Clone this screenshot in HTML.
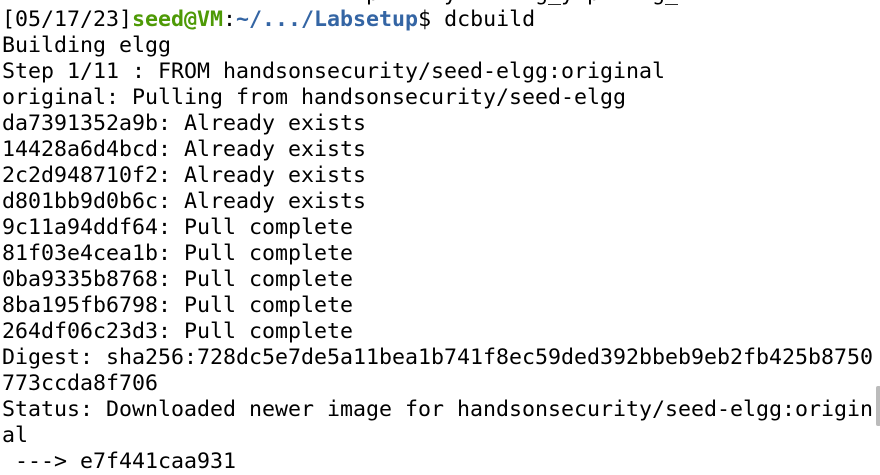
<!DOCTYPE html>
<html><head><style>
html,body{margin:0;padding:0;background:#fff;width:880px;height:475px;overflow:hidden}
pre{margin:0;position:absolute;left:2px;top:-19px;font-family:"DejaVu Sans Mono","Liberation Mono",monospace;font-size:21.6px;line-height:26px;color:#000}
.g{color:#4e9a06;font-weight:bold}.b{color:#3465a4;font-weight:bold}
.sb{position:absolute;left:876px;top:386px;width:5px;height:40px;background:#bbb;border-radius:2px}
</style></head><body>
<pre>                            p     y      g_y p    g_
[05/17/23]<span class="g">seed@VM</span>:<span class="b">~/.../Labsetup</span>$ dcbuild
Building elgg
Step 1/11 : FROM handsonsecurity/seed-elgg:original
original: Pulling from handsonsecurity/seed-elgg
da7391352a9b: Already exists
14428a6d4bcd: Already exists
2c2d948710f2: Already exists
d801bb9d0b6c: Already exists
9c11a94ddf64: Pull complete
81f03e4cea1b: Pull complete
0ba9335b8768: Pull complete
8ba195fb6798: Pull complete
264df06c23d3: Pull complete
Digest: sha256:728dc5e7de5a11bea1b741f8ec59ded392bbeb9eb2fb425b8750
773ccda8f706
Status: Downloaded newer image for handsonsecurity/seed-elgg:origin
al
 ---&gt; e7f441caa931</pre>
<div class="sb"></div>
</body></html>
